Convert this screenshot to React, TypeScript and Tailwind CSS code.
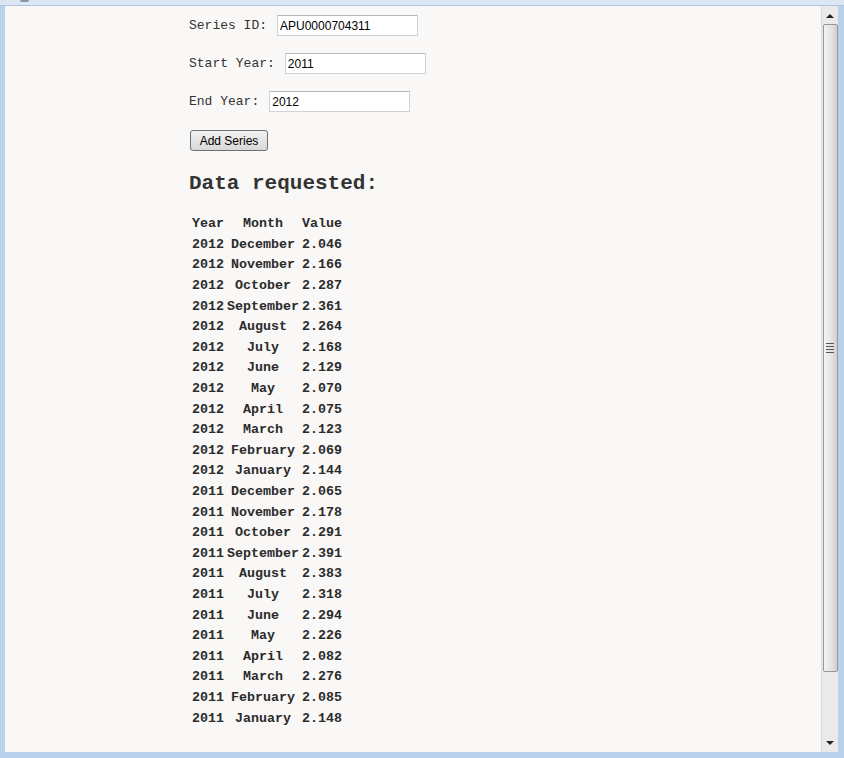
import React from 'react';

const rows: [string, string, string][] = [
  ['2012', 'December', '2.046'],
  ['2012', 'November', '2.166'],
  ['2012', 'October', '2.287'],
  ['2012', 'September', '2.361'],
  ['2012', 'August', '2.264'],
  ['2012', 'July', '2.168'],
  ['2012', 'June', '2.129'],
  ['2012', 'May', '2.070'],
  ['2012', 'April', '2.075'],
  ['2012', 'March', '2.123'],
  ['2012', 'February', '2.069'],
  ['2012', 'January', '2.144'],
  ['2011', 'December', '2.065'],
  ['2011', 'November', '2.178'],
  ['2011', 'October', '2.291'],
  ['2011', 'September', '2.391'],
  ['2011', 'August', '2.383'],
  ['2011', 'July', '2.318'],
  ['2011', 'June', '2.294'],
  ['2011', 'May', '2.226'],
  ['2011', 'April', '2.082'],
  ['2011', 'March', '2.276'],
  ['2011', 'February', '2.085'],
  ['2011', 'January', '2.148'],
];

function Field({ label, value }: { label: string; value: string }) {
  return (
    <div className="flex items-center h-[21px]">
      <span className="text-[13px] text-[#333] pt-[1px]">{label}</span>
      <input
        readOnly
        value={value}
        className="ml-[10px] w-[141px] h-[21px] bg-white border border-[#cfd3d8] border-t-[#b4b8bd] px-[2px] text-[12px] text-black outline-none font-['Liberation_Sans',Arial,sans-serif]"
      />
    </div>
  );
}

function Scrollbar() {
  return (
    <div className="w-[17px] bg-[#eaeaea] border-l border-[#dcdcdc] flex flex-col items-center">
      <div className="h-[18px] w-full flex items-center justify-center">
        <svg width="8" height="5" viewBox="0 0 8 5">
          <path d="M0 5 L4 1 L8 5 Z" fill="#222" />
        </svg>
      </div>
      <div className="w-[15px] h-[648px] rounded-[2px] border border-[#979797] bg-gradient-to-r from-[#f4f4f4] via-[#e6e6e6] to-[#cfcfcf] flex items-center justify-center">
        <div className="flex flex-col gap-[2px] w-[8px]">
          <div className="h-px bg-[#555]" />
          <div className="h-px bg-[#555]" />
          <div className="h-px bg-[#555]" />
          <div className="h-px bg-[#555]" />
        </div>
      </div>
      <div className="flex-1" />
      <div className="h-[18px] w-full flex items-center justify-center">
        <svg width="8" height="5" viewBox="0 0 8 5">
          <path d="M0 0 L8 0 L4 4 Z" fill="#222" />
        </svg>
      </div>
    </div>
  );
}

export default function App() {
  return (
    <div className="w-[844px] h-[758px] bg-[#b9d1ea] flex flex-col overflow-hidden font-['Liberation_Mono','Courier_New',monospace]">
      <div className="h-[6px] bg-[#dbe7f5] border-b border-[#aec4dc] relative">
        <div className="absolute left-[20px] top-0 w-[9px] h-[2px] rounded-b bg-[#8a949e]" />
      </div>
      <div className="flex flex-1 min-h-0">
        <div className="w-[5px]" />
        <div className="flex-1 bg-[#f9f8f6] pl-[184px] pt-[9px] overflow-hidden">
          <div className="flex flex-col gap-[17px]">
            <Field label="Series ID:" value="APU0000704311" />
            <Field label="Start Year:" value="2011" />
            <Field label="End Year:" value="2012" />
          </div>
          <button className="mt-[18px] ml-[1px] w-[78px] h-[21px] rounded-[3px] border border-[#707070] bg-gradient-to-b from-[#f2f2f2] to-[#d8d8d8] text-[12px] text-black font-['Liberation_Sans',Arial,sans-serif]">
            Add Series
          </button>
          <h2 className="mt-[19px] h-[24px] leading-[24px] text-[21px] font-bold text-[#333]">Data requested:</h2>
          <div className="mt-[18px] grid grid-cols-[auto_auto_auto] gap-x-[3px] w-max pl-[3px] text-[13.33px] font-bold text-[#2b2b2b]">
            <div className="h-[21.4px] leading-[20.6px] text-center">Year</div>
            <div className="h-[21.4px] leading-[20.6px] text-center">Month</div>
            <div className="h-[21.4px] leading-[20.6px] text-center">Value</div>
            {rows.map((r, i) => (
              <React.Fragment key={i}>
                <div className="h-[20.6px] leading-[20.6px] text-center">{r[0]}</div>
                <div className="h-[20.6px] leading-[20.6px] text-center">{r[1]}</div>
                <div className="h-[20.6px] leading-[20.6px] text-center">{r[2]}</div>
              </React.Fragment>
            ))}
          </div>
        </div>
        <Scrollbar />
        <div className="w-[6px]" />
      </div>
      <div className="h-[6px]" />
    </div>
  );
}
